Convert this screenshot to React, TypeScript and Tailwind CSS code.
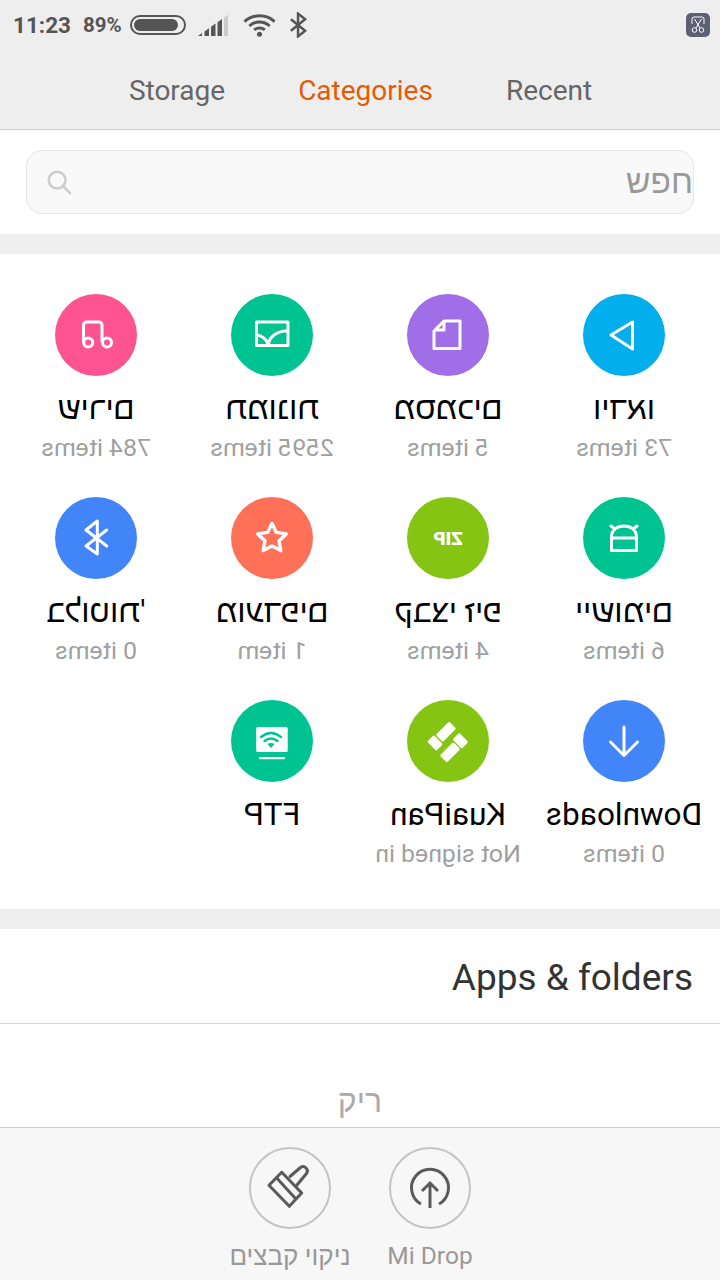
import type { ReactNode } from "react";

interface Category {
  name: string;
  sub?: string;
  color: string;
  icon: ReactNode;
}

const line = { fill: "none", stroke: "#fff", strokeWidth: 3, strokeLinecap: "round", strokeLinejoin: "round" } as const;

// the grid gets flipped as a whole, so these are drawn the un-flipped way round
const categories: Category[] = [
  {
    name: "וידאו",
    sub: "73 items",
    color: "bg-[#02aeec]",
    icon: <path {...line} d="M54 41 L32.5 28 V55 Z" />,
  },
  {
    name: "מסמכים",
    sub: "5 items",
    color: "bg-[#a06ee6]",
    icon: <path {...line} d="M29 27 H45 L55 37 V54.5 H29 Z M45 28 V36 H54" />,
  },
  {
    name: "תמונות",
    sub: "2595 items",
    color: "bg-[#00c392]",
    icon: (
      <path {...line} d="M25 28 H56.5 V51.5 H25 Z M44.5 51 C44.5 43 36 37 25.5 36.7 M56 41 C51 42 47 45 45.5 49" />
    ),
  },
  {
    name: "שירים",
    sub: "784 items",
    color: "bg-[#ff5490]",
    icon: (
      <>
        <path {...line} d="M35 47 V31 a3 3 0 0 1 3 -3 H50.5 a3 3 0 0 1 3 3 V47" />
        <circle {...line} cx="30" cy="48.5" r="4.5" />
        <circle {...line} cx="48.8" cy="48.5" r="4.5" />
      </>
    ),
  },
  {
    name: "יישומים",
    sub: "6 items",
    color: "bg-[#00c392]",
    icon: (
      <path
        {...line}
        d="M28.5 40 C28.5 33 34 29 41 29 C48 29 53.5 33 53.5 40 V53.5 H28.5 Z M28.5 41 H53.5 M28 29 L32 32 M54 29 L50 32"
      />
    ),
  },
  {
    name: "קבצי זיפ",
    sub: "4 items",
    color: "bg-[#85c413]",
    icon: null,
  },
  {
    name: "מועדפים",
    sub: "1 item",
    color: "bg-[#ff7058]",
    icon: (
      <polygon
        {...line}
        strokeWidth={3.4}
        points="41,26.5 45.4,35.4 55.3,36.9 48.1,43.8 49.8,53.6 41,49 32.2,53.6 33.9,43.8 26.7,36.9 36.6,35.4"
      />
    ),
  },
  {
    name: "בלוטות'",
    sub: "0 items",
    color: "bg-[#4285f8]",
    icon: <path {...line} d="M30.3 33 L51 49 L39.7 57 V24 L51 33 L30.3 49" />,
  },
  {
    name: "Downloads",
    sub: "0 items",
    color: "bg-[#4285f8]",
    icon: <path {...line} d="M41 27 V55 M27.5 42 L41 55.5 L54.5 42" />,
  },
  {
    name: "KuaiPan",
    sub: "Not signed in",
    color: "bg-[#85c413]",
    icon: (
      <g fill="#fff">
        <rect x="33.5" y="26.7" width="19" height="10" rx="1.5" transform="rotate(45 43 31.7)" />
        <rect x="22" y="36" width="13" height="9.5" rx="1.5" transform="rotate(-45 28.5 40.7)" />
        <rect x="47.5" y="38.2" width="13" height="9.5" rx="1.5" transform="rotate(-45 54 43)" />
        <rect x="29.5" y="47.3" width="19" height="10" rx="1.5" transform="rotate(45 39 52.3)" />
      </g>
    ),
  },
  {
    name: "FTP",
    color: "bg-[#00c392]",
    icon: (
      <>
        <rect x="25.3" y="27" width="31.5" height="25" rx="1.5" fill="#fff" />
        <rect x="28" y="57" width="26" height="2.2" fill="#fff" />
        <g fill="none" stroke="#00c392" strokeWidth="2.4" strokeLinecap="round">
          <path d="M32 37 Q42 29 52 37" />
          <path d="M35.5 41 Q42 36 48.5 41" />
        </g>
        <path d="M38.5 44 Q42 42 45.5 44 L42 48 Z" fill="#00c392" />
      </>
    ),
  },
];

function StatusBar() {
  return (
    <div className="flex h-[50px] items-center pl-[13px] pr-[10px] text-[#555]">
      <span className="text-[22.5px] font-bold leading-none">11:23</span>
      <span className="ml-[12px] text-[20.5px] font-bold leading-none">89%</span>
      <div className="ml-[8px] flex h-[20px] w-[56px] items-center rounded-full border-2 border-[#555] p-[2px]">
        <div className="h-full w-[44px] rounded-full bg-[#555]" />
      </div>
      <svg width="31" height="22" viewBox="0 0 31 22" className="ml-[12px]">
        <path d="M0 22 L4 19 V22 Z" fill="#555" />
        <path d="M6.5 17.4 L11 14.2 V22 H6.5 Z" fill="#555" />
        <path d="M13 12.8 L17.5 9.6 V22 H13 Z" fill="#555" />
        <path d="M19.5 8.2 L24 5 V22 H19.5 Z" fill="#555" />
        <path d="M26 3.6 L30 0.7 V22 H26 Z" fill="#ccc" />
      </svg>
      <svg width="33" height="26" viewBox="0 0 34 26" className="ml-[14px]" fill="none" stroke="#555" strokeWidth="3">
        <path d="M1.5 9.5 C10 1.5 24 1.5 32.5 9.5" />
        <path d="M6.5 14 C12.5 8.5 21.5 8.5 27.5 14" />
        <path d="M11.5 18 C14.5 15.5 19.5 15.5 22.5 18" />
        <circle cx="17" cy="22.5" r="2.6" fill="#555" stroke="none" />
      </svg>
      <svg width="19" height="26" viewBox="0 0 20 26" className="ml-[13px]" fill="none" stroke="#555" strokeWidth="2.6">
        <path d="M2 7 L17 19 L9.5 25 V1 L17 7 L2 19" />
      </svg>
      <div className="ml-auto flex h-[24px] w-[24px] items-center justify-center rounded-[5px] bg-[#5d6073]">
        <svg width="18" height="18" viewBox="0 0 18 18" fill="none" stroke="#fff" strokeWidth="1">
          <path d="M3 8 V3 a2 2 0 0 1 2 -2 H13 a2 2 0 0 1 2 2 V8" />
          <path d="M5.5 3 L11 12 M12.5 3 L7 12" />
          <circle cx="5.5" cy="14" r="2.3" />
          <circle cx="12.5" cy="14" r="2.3" />
        </svg>
      </div>
    </div>
  );
}

function Tabs() {
  return (
    <div className="flex h-[80px] items-start justify-center gap-[73px] border-b border-[#cfcfcf] pl-[1px] pt-[21px] text-[28px] leading-[40px] text-[#666]">
      <span>Storage</span>
      <span className="text-[#e65a06]">Categories</span>
      <span>Recent</span>
    </div>
  );
}

function CategoryCell({ item }: { item: Category }) {
  return (
    <div className="flex h-[203px] flex-col items-center">
      <div className={`flex h-[82px] w-[82px] items-center justify-center rounded-full ${item.color}`}>
        {item.icon ? (
          <svg width="82" height="82" viewBox="0 0 82 82">
            {item.icon}
          </svg>
        ) : (
          <span className="text-[19px] font-black leading-none text-white">ZIP</span>
        )}
      </div>
      <div dir="auto" className="mt-[13px] whitespace-nowrap text-[31.5px] leading-[40px] text-black">
        {item.name}
      </div>
      {item.sub && <div className="text-[24.8px] leading-[38px] text-[#a0a0a0]">{item.sub}</div>}
    </div>
  );
}

export default function App() {
  return (
    <div className="flex h-[1280px] w-[720px] flex-col overflow-hidden bg-white [font-family:Roboto,'Liberation_Sans',sans-serif]">
      <div className="bg-[#eeeeee]">
        <StatusBar />
        <Tabs />
      </div>

      <div className="h-[104px] px-[26px] pt-[20px]">
        <div className="flex h-[64px] items-center justify-between rounded-[16px] border border-[#e5e5e5] bg-[#f9f9f9] pl-[19px]">
          <svg width="26" height="26" viewBox="0 0 28 28" fill="none" stroke="#ccc" strokeWidth="2.8" strokeLinecap="round">
            <circle cx="12" cy="12" r="9" />
            <path d="M19 19 L26 26" />
          </svg>
          <span dir="rtl" className="text-[33.5px] leading-none text-[#999]">חפש</span>
        </div>
      </div>

      <div className="h-[20px] bg-[#efefef]" />

      <div className="grid h-[655px] -scale-x-100 grid-cols-4 content-start px-[8px] pt-[40px]">
        {categories.map((c) => (
          <CategoryCell key={c.name} item={c} />
        ))}
      </div>

      <div className="h-[20px] bg-[#efefef]" />

      <div className="flex h-[95px] items-center justify-end border-b border-[#d6d6d6] pr-[27px] pt-[3px] text-[37px] text-[#333]">
        Apps &amp; folders
      </div>

      <div className="flex h-[103px] items-end justify-center pb-[2px] text-[32px] leading-[48px] text-[#aaa]">
        <span dir="rtl">ריק</span>
      </div>

      <div className="flex flex-1 justify-center gap-[58px] border-t border-[#cfcfcf] bg-[#f7f7f7] pt-[19px]">
        <div className="flex w-[82px] flex-col items-center">
          <div className="flex h-[82px] w-[82px] shrink-0 items-center justify-center rounded-full border-2 border-[#c4c4c4]">
            <svg width="78" height="78" viewBox="0 0 78 78" fill="none" stroke="#5a5a5a" strokeWidth="3" strokeLinejoin="round" strokeLinecap="round">
              <path d="M18 36.3 L38.3 57.3 L50.7 44 L30.7 23.3 Z" />
              <path d="M25.7 29 L44 49" />
              <path d="M39 27.5 L49.5 18.5 a4.3 4.3 0 0 1 6 6 L46 36" />
            </svg>
          </div>
          <span dir="rtl" className="mt-[9px] whitespace-nowrap text-[26px] leading-[36px] text-[#999]">ניקוי קבצים</span>
        </div>
        <div className="flex w-[82px] flex-col items-center">
          <div className="flex h-[82px] w-[82px] shrink-0 items-center justify-center rounded-full border-2 border-[#c4c4c4]">
            <svg width="78" height="78" viewBox="0 0 78 78" fill="none" stroke="#5a5a5a" strokeWidth="3">
              <path d="M30 55 A18.5 18.5 0 1 1 48 55" />
              <path d="M39 59 V34 M31 42 L39 34 L47 42" />
            </svg>
          </div>
          <span className="mt-[9px] whitespace-nowrap text-[24.5px] leading-[36px] text-[#999]">Mi Drop</span>
        </div>
      </div>
    </div>
  );
}
